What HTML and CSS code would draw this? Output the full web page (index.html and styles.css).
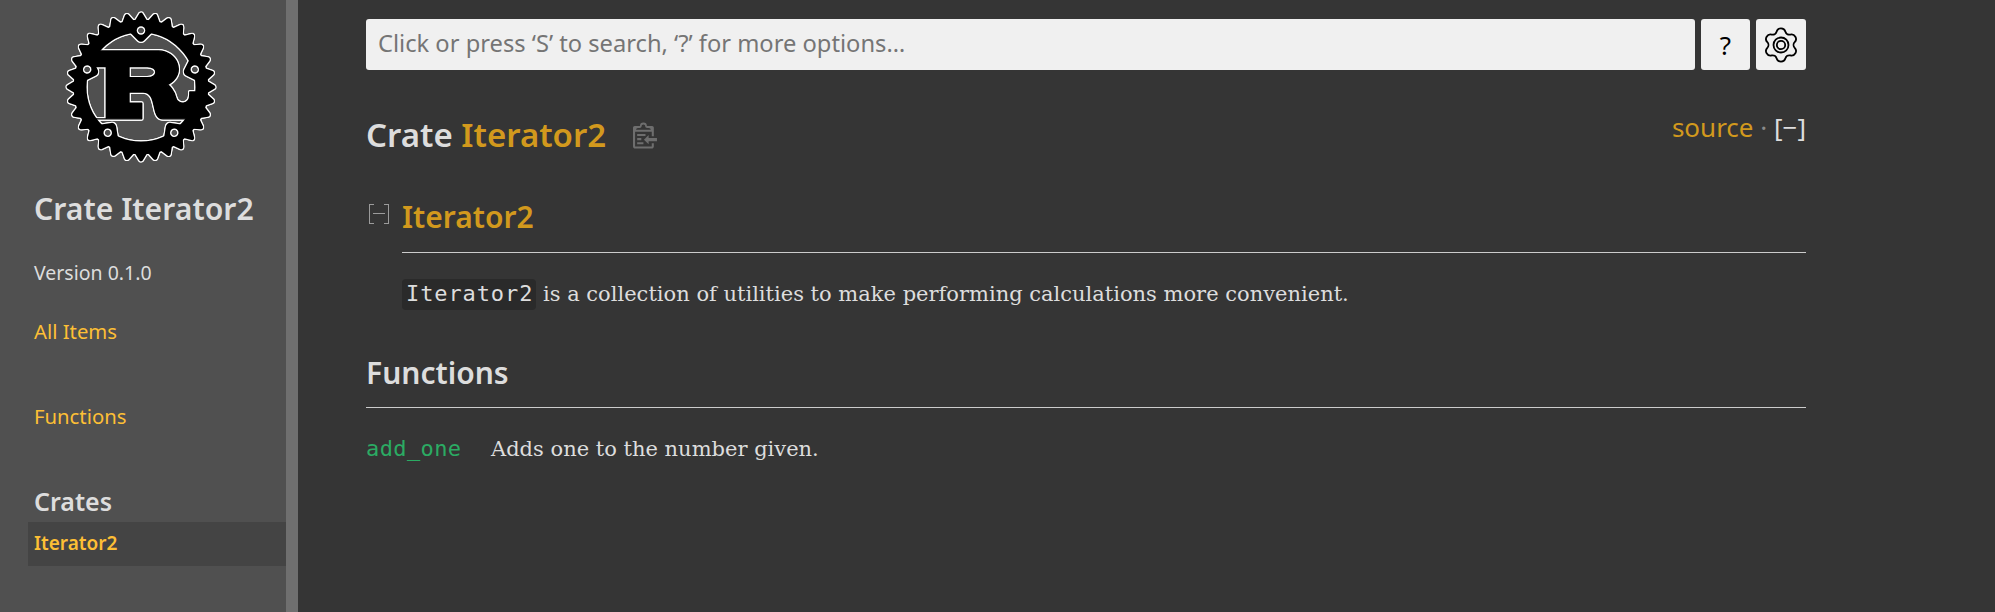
FILE: index.html
```html
<!DOCTYPE html>
<html lang="en">
<head>
<meta charset="utf-8">
<title>Iterator2 - Rust</title>
<link rel="stylesheet" href="styles.css">
</head>
<body>
<nav class="sidebar">
  <svg class="logo" viewBox="0 0 106 106" width="150" height="150" aria-label="logo">
    <defs>
      <polygon id="cog" stroke="#000" stroke-width="3" stroke-linejoin="round" points="46,3 51,0 46,-3"/>
      <g id="cog2"><use href="#cog"/><use href="#cog" transform="rotate(11.25)"/></g>
      <g id="cog4"><use href="#cog2"/><use href="#cog2" transform="rotate(22.5)"/></g>
      <g id="cog8"><use href="#cog4"/><use href="#cog4" transform="rotate(45)"/></g>
      <polygon id="mount" stroke="#000" stroke-width="6" stroke-linejoin="round" points="-7,-42 0,-35 7,-42"/>
      <circle id="hole" cy="-40" r="3"/>
      <mask id="holes" maskUnits="userSpaceOnUse" x="-60" y="-60" width="120" height="120">
        <rect x="-60" y="-60" width="120" height="120" fill="#fff"/>
        <use href="#hole"/>
        <use href="#hole" transform="rotate(72)"/>
        <use href="#hole" transform="rotate(144)"/>
        <use href="#hole" transform="rotate(216)"/>
        <use href="#hole" transform="rotate(288)"/>
      </mask>
    </defs>
    <g transform="translate(53 53)">
      <path transform="translate(.5 .5)" stroke="#000" stroke-width="1" stroke-linejoin="round" d="M-9-15H4C12-15 12-7 4-7H-9ZM-40 22H0V11H-9V3H1C12 3 6 22 15 22H40V3H34V5C34 13 25 12 24 7C23 2 19-2 18-2C33-10 24-26 12-26H-35V-15H-25V22H-40Z"/>
      <g mask="url(#holes)">
        <circle r="43" fill="none" stroke="#000" stroke-width="9"/>
        <use href="#cog8"/><use href="#cog8" transform="rotate(90)"/>
        <use href="#cog8" transform="rotate(180)"/><use href="#cog8" transform="rotate(270)"/>
        <use href="#mount"/>
        <use href="#mount" transform="rotate(72)"/>
        <use href="#mount" transform="rotate(144)"/>
        <use href="#mount" transform="rotate(216)"/>
        <use href="#mount" transform="rotate(288)"/>
      </g>
    </g>
  </svg>
  <h2 class="side-title">Crate Iterator2</h2>
  <p class="side-version">Version 0.1.0</p>
  <a class="side-link all-items" href="#">All Items</a>
  <a class="side-link functions-link" href="#">Functions</a>
  <h3 class="side-crates">Crates</h3>
  <a class="side-current" href="#">Iterator2</a>
</nav>
<div class="resizer"></div>
<main class="main">
  <div class="search-row">
    <div class="search">Click or press ‘S’ to search, ‘?’ for more options…</div>
    <button class="tool-btn help">?</button>
    <button class="tool-btn wheel" aria-label="settings">
      <svg viewBox="-18 -18 36 36" width="36" height="36" fill="none" stroke="#000">
        <path stroke-width="1.8" d="M-4.43-13.23A4.6 4.6 0 0 1 4.43-13.23A3.96 3.96 0 0 0 9.24-10.45A4.6 4.6 0 0 1 13.67-2.78A3.96 3.96 0 0 0 13.67 2.78A4.6 4.6 0 0 1 9.24 10.45A3.96 3.96 0 0 0 4.43 13.23A4.6 4.6 0 0 1-4.43 13.23A3.96 3.96 0 0 0-9.24 10.45A4.6 4.6 0 0 1-13.67 2.78A3.96 3.96 0 0 0-13.67-2.78A4.6 4.6 0 0 1-9.24-10.45A3.96 3.96 0 0 0-4.43-13.23Z"/>
        <circle r="7.5" stroke-width="1.8"/>
        <circle r="4.2" stroke-width="1.8"/>
      </svg>
    </button>
  </div>
  <div class="title-row">
    <h1 class="page-title">Crate <a class="crate-name" href="#">Iterator2</a></h1>
    <svg class="copy-icon" viewBox="0 0 24 25" width="25" height="27" fill="#6e6e6e">
      <path d="M18 20h2v3c0 1-1 2-2 2H2c-.998 0-2-1-2-2V5c0-.911.755-1.667 1.667-1.667h5A3.323 3.323 0 0110 0a3.323 3.323 0 013.333 3.333h5C19.245 3.333 20 4.09 20 5v8.333h-2V9H2v14h16v-3zM3 7h14c0-.911-.793-1.667-1.75-1.667H13.5c-.957 0-1.75-.755-1.75-1.666C11.75 2.755 10.957 2 10 2s-1.75.755-1.75 1.667c0 .911-.793 1.666-1.75 1.666H4.75C3.793 5.333 3 6.09 3 7z"/>
      <path d="M4 19h6v2H4zM12 11H4v2h8zM4 17h4v-2H4zM15 15v-3l-4.5 4.5L15 21v-3l8.027-.032L23 15z"/>
    </svg>
    <span class="out-of-band"><a class="source" href="#">source</a><span class="dot"> · </span><span class="collapse-all">[<span class="inner">−</span>]</span></span>
  </div>
  <div class="doc-head">
    <span class="toggle" aria-hidden="true"><span class="toggle-bar"></span></span>
    <h2 class="doc-title">Iterator2</h2>
  </div>
  <p class="doc-text"><code class="inline-code">Iterator2</code> is a collection of utilities to make performing calculations more convenient.</p>
  <h2 class="section-title">Functions</h2>
  <div class="item-row">
    <a class="fn-link" href="#">add_one</a>
    <span class="fn-desc">Adds one to the number given.</span>
  </div>
</main>
</body>
</html>
```
FILE: styles.css
```css
* { box-sizing: border-box; }
html, body { margin: 0; height: 100%; }
body {
  display: flex;
  height: 612px;
  overflow: hidden;
  background: #353535;
  color: #ddd;
  font-family: "Noto Sans", sans-serif;
}
a { text-decoration: none; }
h1, h2, h3, p { margin: 0; }

.sidebar {
  width: 286px;
  flex: none;
  background: #505050;
  display: flex;
  flex-direction: column;
  padding-top: 12px;
}
.logo {
  display: block;
  margin-left: 66px;
  flex: none;
  filter: drop-shadow(1px 0 0 #fff) drop-shadow(0 1px 0 #fff) drop-shadow(-1px 0 0 #fff) drop-shadow(0 -1px 0 #fff);
}
.side-title {
  margin: 27px 0 0 34px;
  font-size: 30.2px;
  line-height: 40px;
  font-weight: 600;
  white-space: nowrap;
}
.side-version {
  margin: 31px 0 0 34px;
  font-size: 19.5px;
  line-height: 26px;
}
.side-link {
  margin-left: 34px;
  font-size: 20.3px;
  line-height: 26px;
  color: #fdbf35;
}
.all-items { margin-top: 32px; }
.functions-link { margin-top: 59px; }
.side-crates {
  margin: 55px 0 0 34px;
  font-size: 25px;
  line-height: 34px;
  font-weight: 600;
}
.side-current {
  margin: 4px 0 0 28px;
  padding-left: 6px;
  height: 44px;
  line-height: 42px;
  background: #444;
  color: #fdbf35;
  font-size: 19px;
  font-weight: 600;
}

.resizer {
  width: 12px;
  flex: none;
  background: #6f6f6f;
}

.main {
  flex: none;
  width: 1508px;
  padding: 19px 0 0 68px;
}
.search-row { display: flex; gap: 6px; height: 51px; }
.search {
  flex: 1;
  background: #f0f0f0;
  border-radius: 3px;
  color: #757575;
  font-size: 23.7px;
  line-height: 49px;
  padding-left: 12px;
}
.tool-btn {
  width: 49px;
  padding: 0;
  border: 0;
  border-radius: 3px;
  background: #f0f0f0;
  color: #000;
  font: 400 26px "Noto Sans", sans-serif;
  display: flex;
  align-items: center;
  justify-content: center;
}
.wheel { width: 50px; }

.title-row {
  display: flex;
  align-items: center;
  margin-top: 40px;
  height: 50px;
  width: 1440px;
}
.page-title {
  font-size: 33px;
  line-height: 50px;
  font-weight: 600;
}
.crate-name { color: #d2991d; }
.copy-icon { margin-left: 27px; flex: none; }
.out-of-band {
  margin-left: auto;
  align-self: flex-start;
  font-size: 26px;
  line-height: 34px;
  white-space: nowrap;
}
.source { color: #d2991d; }
.dot { color: #8a8a8a; }
.collapse-all { color: #ddd; }

.doc-head {
  display: flex;
  align-items: center;
  margin-top: 32px;
  padding-bottom: 10px;
  width: 1440px;
  height: 60px;
}
.toggle {
  width: 20px;
  height: 20px;
  flex: none;
  margin: 0 0 7px 3px;
  border-left: 1px solid #9b9b9b;
  border-right: 1px solid #9b9b9b;
  display: flex;
  align-items: center;
  justify-content: center;
  position: relative;
}
.toggle::before, .toggle::after {
  content: "";
  position: absolute;
  left: 0;
  right: 0;
  height: 1px;
  background: linear-gradient(to right, #9b9b9b 4px, transparent 4px, transparent 14px, #9b9b9b 14px);
}
.toggle::before { top: 0; }
.toggle::after { bottom: 0; }
.toggle-bar { width: 12px; height: 1px; background: #9b9b9b; }
.doc-title {
  margin-left: 13px;
  flex: 1;
  font-size: 30px;
  line-height: 50px;
  font-weight: 600;
  color: #d2991d;
}
.doc-text {
  margin: 0 0 0 36px;
  padding-top: 25px;
  border-top: 1px solid #ccc;
  width: 1404px;
  font-family: "DejaVu Serif", serif;
  font-size: 21px;
  line-height: 32px;
}
.inline-code {
  display: inline-block;
  height: 31px;
  background: #2a2a2a;
  border-radius: 4px;
  padding: 0 3px 0 4px;
  font-family: "DejaVu Sans Mono", monospace;
  font-size: 22px;
  letter-spacing: 0.9px;
  line-height: 30px;
}
.section-title {
  margin-top: 40px;
  height: 58px;
  width: 1440px;
  border-bottom: 1px solid #ccc;
  font-size: 30px;
  line-height: 46px;
  font-weight: 600;
}
.item-row {
  display: flex;
  align-items: baseline;
  margin-top: 25px;
}
.fn-link {
  color: #2bab63;
  font-family: "DejaVu Sans Mono", monospace;
  font-size: 22px;
  letter-spacing: 0.4px;
  line-height: 32px;
  width: 125px;
}
.fn-desc {
  font-family: "DejaVu Serif", serif;
  font-size: 21px;
  line-height: 32px;
}
```
